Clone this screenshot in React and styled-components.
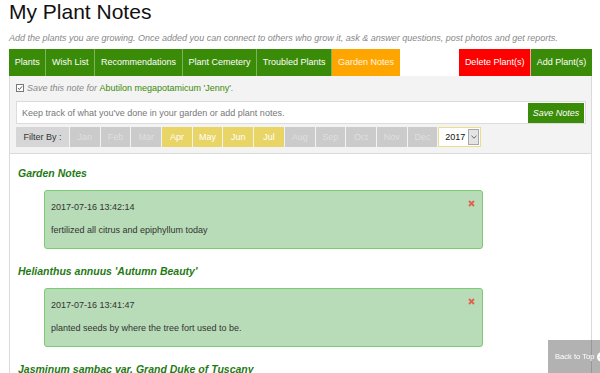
import React from "react";
import styled, { createGlobalStyle } from "styled-components";

const tabs = [
  { label: "Plants" },
  { label: "Wish List" },
  { label: "Recommendations" },
  { label: "Plant Cemetery" },
  { label: "Troubled Plants" },
  { label: "Garden Notes", active: true },
];

const months = [
  { name: "Jan", has: false },
  { name: "Feb", has: false },
  { name: "Mar", has: false },
  { name: "Apr", has: true },
  { name: "May", has: true },
  { name: "Jun", has: true },
  { name: "Jul", has: true },
  { name: "Aug", has: false },
  { name: "Sep", has: false },
  { name: "Oct", has: false },
  { name: "Nov", has: false },
  { name: "Dec", has: false },
];

const groups = [
  {
    title: "Garden Notes",
    notes: [
      {
        date: "2017-07-16 13:42:14",
        text: "fertilized all citrus and epiphyllum today",
      },
    ],
  },
  {
    title: "Helianthus annuus 'Autumn Beauty'",
    notes: [
      {
        date: "2017-07-16 13:41:47",
        text: "planted seeds by where the tree fort used to be.",
      },
    ],
  },
  {
    title: "Jasminum sambac var. Grand Duke of Tuscany",
    notes: [
      {
        date: "2017-07-10 09:12:03",
        text: "new buds opening on the south side.",
      },
    ],
  },
];

function App() {
  return (
    <>
      <GlobalStyle />
      <Page>
        <Title>My Plant Notes</Title>
        <Intro>
          Add the plants you are growing. Once added you can connect to others
          who grow it, ask &amp; answer questions, post photos and get reports.
        </Intro>

        <TabBar>
          <TabGroup>
            {tabs.map(({ label, active }) => (
              <Tab key={label} $tone={active ? "orange" : "green"}>
                {label}
              </Tab>
            ))}
          </TabGroup>
          <TabGroup>
            <Tab $tone="red">Delete Plant(s)</Tab>
            <Tab $tone="green">Add Plant(s)</Tab>
          </TabGroup>
        </TabBar>

        <ControlPanel>
          <SaveRow>
            <CheckBox>
              <svg width="8" height="8" viewBox="0 0 8 8">
                <path
                  d="M1.3 4.2 L3.2 6 L6.8 1.8"
                  fill="none"
                  stroke="#333"
                  strokeWidth="1.1"
                />
              </svg>
            </CheckBox>
            <em>Save this note for </em>
            <PlantLink>Abutilon megapotamicum 'Jenny'</PlantLink>
            <em>.</em>
          </SaveRow>

          <InputGroup>
            <NoteInput placeholder="Keep track of what you've done in your garden or add plant notes." />
            <SaveButton>Save Notes</SaveButton>
          </InputGroup>

          <FilterRow>
            <FilterLabel>Filter By :</FilterLabel>
            {months.map((m) => (
              <Month key={m.name} $on={m.has}>
                {m.name}
              </Month>
            ))}
            <YearSelect>
              <span>2017</span>
              <Arrow>
                <svg width="6" height="4" viewBox="0 0 6 4">
                  <path
                    d="M0.5 0.8 L3 3.2 L5.5 0.8"
                    fill="none"
                    stroke="#555"
                    strokeWidth="0.9"
                  />
                </svg>
              </Arrow>
            </YearSelect>
          </FilterRow>
        </ControlPanel>

        <NotesArea>
          {groups.map((g) => (
            <div key={g.title}>
              <GroupTitle>{g.title}</GroupTitle>
              {g.notes.map((n) => (
                <NoteCard key={n.date}>
                  <NoteDate>{n.date}</NoteDate>
                  <NoteText>{n.text}</NoteText>
                  <RemoveIcon>
                    <svg width="7" height="7" viewBox="0 0 7 7">
                      <path
                        d="M1 1 L6 6 M6 1 L1 6"
                        stroke="#e2604c"
                        strokeWidth="1.8"
                      />
                    </svg>
                  </RemoveIcon>
                </NoteCard>
              ))}
            </div>
          ))}
        </NotesArea>
      </Page>

      <BackToTop>
        Back to Top
        <TopIcon>
          <svg width="10" height="10" viewBox="0 0 10 10">
            <circle cx="5" cy="5" r="5" fill="#fff" />
            <path d="M2.8 6 L5 3.6 L7.2 6" fill="none" stroke="#999" strokeWidth="1.3" />
          </svg>
        </TopIcon>
      </BackToTop>
    </>
  );
}

const GlobalStyle = createGlobalStyle`
  html, body {
    margin: 0;
    padding: 0;
    overflow: hidden;
    background: #fff;
  }
  body {
    font-family: "Liberation Sans", Arial, sans-serif;
    color: #333;
  }
`;

const Page = styled.div`
  padding: 0 8px 0 9px;
`;

const Title = styled.h1`
  margin: 0;
  font-size: 21px;
  line-height: 24px;
  font-weight: normal;
  color: #111;
`;

const Intro = styled.p`
  margin: 8px 0 5px;
  font-size: 9px;
  line-height: 12px;
  font-style: italic;
  color: #888;
  white-space: nowrap;
`;

const tabColors = {
  green: "#3a8b08",
  orange: "#ffa500",
  red: "#ff0000",
};

const TabBar = styled.div`
  display: flex;
  justify-content: space-between;
  height: 27px;
`;

const TabGroup = styled.div`
  display: flex;
`;

const Tab = styled.div`
  padding: 0 5.7px;
  line-height: 27px;
  font-size: 9px;
  color: ${(p) => (p.$tone === "orange" ? "#fff6e0" : "#fff")};
  background: ${(p) => tabColors[p.$tone]};
  border-right: 1px solid
    ${(p) => (p.$tone === "red" ? "#f7a0a0" : "rgba(255, 255, 255, 0.35)")};
  white-space: nowrap;

  &:last-child {
    border-right: none;
  }
`;

const ControlPanel = styled.div`
  background: #f3f3f3;
  border: 1px solid #dadada;
  border-top: none;
  padding: 5px 5px 6px 6px;
`;

const SaveRow = styled.div`
  display: flex;
  align-items: center;
  height: 14px;
  font-size: 9px;
  color: #888;
  white-space: pre;

  em {
    font-style: italic;
  }
`;

const CheckBox = styled.span`
  display: inline-flex;
  align-items: center;
  justify-content: center;
  width: 8px;
  height: 8px;
  border: 1px solid #777;
  background: #fff;
  margin-right: 3px;
  box-sizing: border-box;
`;

const PlantLink = styled.span`
  color: #3a8b08;
`;

const InputGroup = styled.div`
  display: flex;
  align-items: center;
  margin-top: 6px;
  height: 23px;
  box-sizing: border-box;
  border: 1px solid #dcdcdc;
  background: #fff;
  padding-right: 1px;
`;

const NoteInput = styled.input`
  flex: 1;
  border: none;
  outline: none;
  background: transparent;
  padding: 0 5px;
  font-family: inherit;
  font-size: 9px;
  color: #333;

  &::placeholder {
    color: #777;
  }
`;

const SaveButton = styled.div`
  width: 56px;
  height: 20px;
  line-height: 20px;
  text-align: center;
  background: #3a8b08;
  color: #fff;
  font-size: 9px;
  font-style: italic;
`;

const FilterRow = styled.div`
  display: flex;
  gap: 1px;
  height: 20px;
  margin-top: 3px;
`;

const FilterLabel = styled.div`
  width: 53px;
  line-height: 20px;
  text-align: center;
  background: #d6d6d6;
  font-size: 9px;
  color: #333;
`;

const Month = styled.div`
  width: 29.7px;
  line-height: 20px;
  text-align: center;
  font-size: 9px;
  background: ${(p) => (p.$on ? "#e9d466" : "#cbcbcb")};
  color: ${(p) => (p.$on ? "#fff" : "#dfdfdf")};
`;

const YearSelect = styled.div`
  display: flex;
  align-items: center;
  justify-content: space-between;
  width: 43px;
  box-sizing: border-box;
  border: 1px solid #ecdc8e;
  background: #fff;
  padding: 0 1px 0 6px;
  font-size: 9px;
  color: #111;
`;

const Arrow = styled.span`
  display: flex;
  align-items: center;
  justify-content: center;
  width: 11px;
  height: 16px;
  box-sizing: border-box;
  border: 1px solid #a8a8a8;
  background: #e4e4e4;
`;

const NotesArea = styled.div`
  border-left: 1px solid #dadada;
  border-right: 1px solid #dadada;
  padding: 12px 9px 0 8px;
  min-height: 300px;
`;

const GroupTitle = styled.h3`
  margin: 0 0 10px;
  font-size: 10.5px;
  line-height: 14px;
  font-weight: bold;
  font-style: italic;
  color: #1f7a14;
  white-space: nowrap;
`;

const NoteCard = styled.div`
  position: relative;
  width: 439px;
  margin: 0 0 15px 26px;
  box-sizing: border-box;
  padding: 10px 6px 11px;
  background: #b8dcb7;
  border: 1px solid #7acb72;
  border-radius: 3px;
  font-size: 9px;
  line-height: 13px;
  color: #333;
`;

const NoteDate = styled.div``;

const NoteText = styled.div`
  margin-top: 10px;
`;

const RemoveIcon = styled.span`
  position: absolute;
  top: 9px;
  right: 7px;
  display: flex;
`;

const BackToTop = styled.div`
  position: fixed;
  left: 548px;
  right: -30px;
  bottom: 0;
  height: 33px;
  display: flex;
  align-items: center;
  gap: 2px;
  padding-left: 7px;
  background: rgba(0, 0, 0, 0.3);
  color: #fff;
  font-family: "Liberation Sans", Arial, sans-serif;
  font-size: 7.6px;
  white-space: nowrap;
`;

const TopIcon = styled.span`
  display: flex;
`;

export default App;
